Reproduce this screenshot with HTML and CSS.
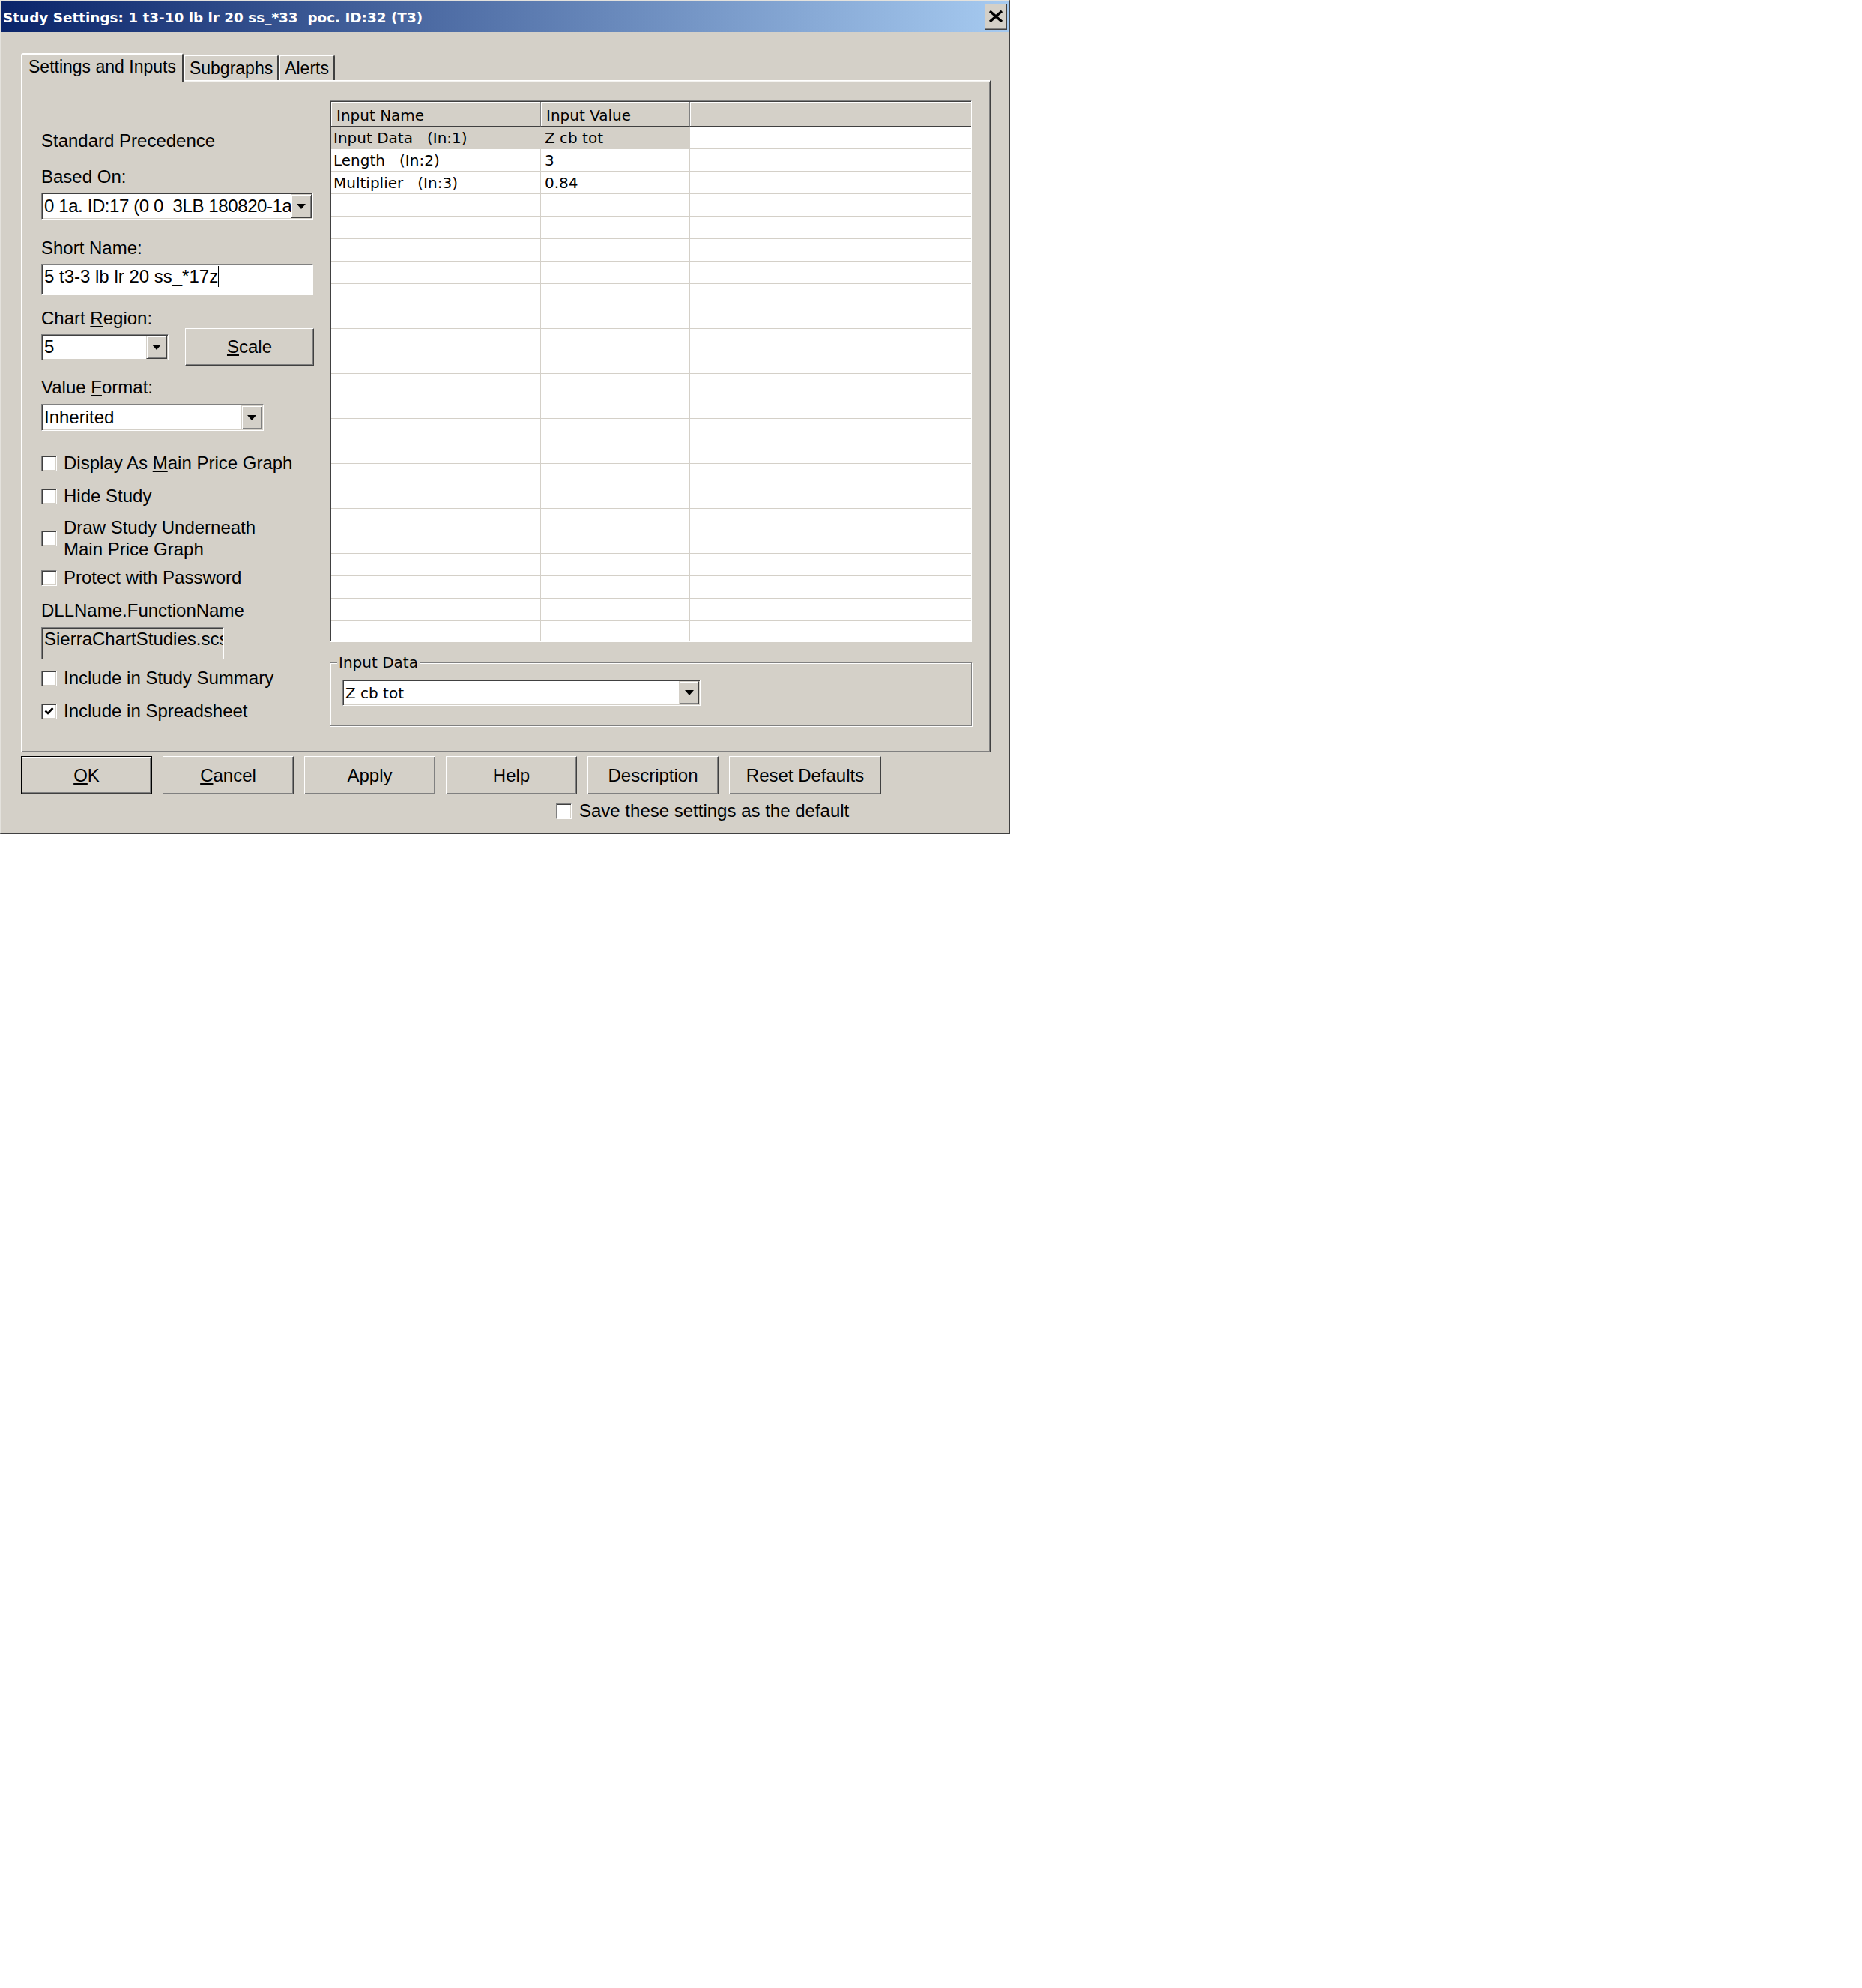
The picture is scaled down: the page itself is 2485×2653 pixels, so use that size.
FILE: index.html
```html
<!DOCTYPE html>
<html lang="en">
<head>
    <meta charset="UTF-8">
    <title>Study Settings</title>
    <link rel="stylesheet" href="styles.css">
</head>
<body>
    <div class="dialog">
        <div class="titlebar">
            <span class="title">Study Settings: 1 t3-10 lb lr 20 ss_*33  poc. ID:32 (T3)</span>
            <button class="close" type="button" aria-label="Close">
                <svg width="20" height="16" viewBox="0 0 20 16"><path d="M2 1L18 15M18 1L2 15" stroke="#000" stroke-width="3.4"/></svg>
            </button>
        </div>

        <div class="content">
            <div class="tabs">
                <div class="tab active">Settings and Inputs</div>
                <div class="tab">Subgraphs</div>
                <div class="tab">Alerts</div>
            </div>

            <div class="panel">
                <!-- left column: study options -->
                <div class="settings">
                    <div class="caption">Standard Precedence</div>
                    <div class="caption based-label">Based On:</div>
                    <div class="combo based-on">
                        <span class="combo-text">0 1a. ID:17 (0 0  3LB 180820-1a</span>
                        <span class="combo-btn"><svg width="12" height="7" viewBox="0 0 12 7"><path d="M0 0H12L6 7Z"/></svg></span>
                    </div>
                    <div class="caption short-label">Short Name:</div>
                    <div class="edit short-name">5 t3-3 lb lr 20 ss_*17z<span class="caret"></span></div>
                    <div class="caption region-label">Chart <u>R</u>egion:</div>
                    <div class="region-row">
                        <div class="combo region">
                            <span class="combo-text">5</span>
                            <span class="combo-btn"><svg width="12" height="7" viewBox="0 0 12 7"><path d="M0 0H12L6 7Z"/></svg></span>
                        </div>
                        <button class="btn scale" type="button"><span><u>S</u>cale</span></button>
                    </div>
                    <div class="caption format-label">Value <u>F</u>ormat:</div>
                    <div class="combo value-format">
                        <span class="combo-text">Inherited</span>
                        <span class="combo-btn"><svg width="12" height="7" viewBox="0 0 12 7"><path d="M0 0H12L6 7Z"/></svg></span>
                    </div>

                    <label class="check check-main"><span class="box"></span><span>Display As <u>M</u>ain Price Graph</span></label>
                    <label class="check check-hide"><span class="box"></span><span>Hide Study</span></label>
                    <label class="check check-under"><span class="box"></span><span class="two-line">Draw Study Underneath<br>Main Price Graph</span></label>
                    <label class="check check-protect"><span class="box"></span><span>Protect with Password</span></label>

                    <div class="caption dll-label">DLLName.FunctionName</div>
                    <div class="edit readonly dll">SierraChartStudies.scs</div>

                    <label class="check check-summary"><span class="box"></span><span>Include in Study Summary</span></label>
                    <label class="check check-sheet"><span class="box"><svg width="13" height="12" viewBox="0 0 13 12"><path d="M1.5 5.5L5 9L11.5 2" fill="none" stroke="#000" stroke-width="2.6"/></svg></span><span>Include in Spreadsheet</span></label>
                </div>

                <!-- right column: inputs list -->
                <div class="inputs">
                    <div class="grid">
                        <div class="grid-head">
                            <div class="hcell">Input Name</div>
                            <div class="hcell">Input Value</div>
                            <div class="hcell"></div>
                        </div>
                        <div class="row selected"><div class="cell name">Input Data   (In:1)</div><div class="cell value">Z cb tot</div><div class="cell"></div></div>
                        <div class="row"><div class="cell name">Length   (In:2)</div><div class="cell value">3</div><div class="cell"></div></div>
                        <div class="row"><div class="cell name">Multiplier   (In:3)</div><div class="cell value">0.84</div><div class="cell"></div></div>
                        <div class="row"><div class="cell"></div><div class="cell"></div><div class="cell"></div></div>
                        <div class="row"><div class="cell"></div><div class="cell"></div><div class="cell"></div></div>
                        <div class="row"><div class="cell"></div><div class="cell"></div><div class="cell"></div></div>
                        <div class="row"><div class="cell"></div><div class="cell"></div><div class="cell"></div></div>
                        <div class="row"><div class="cell"></div><div class="cell"></div><div class="cell"></div></div>
                        <div class="row"><div class="cell"></div><div class="cell"></div><div class="cell"></div></div>
                        <div class="row"><div class="cell"></div><div class="cell"></div><div class="cell"></div></div>
                        <div class="row"><div class="cell"></div><div class="cell"></div><div class="cell"></div></div>
                        <div class="row"><div class="cell"></div><div class="cell"></div><div class="cell"></div></div>
                        <div class="row"><div class="cell"></div><div class="cell"></div><div class="cell"></div></div>
                        <div class="row"><div class="cell"></div><div class="cell"></div><div class="cell"></div></div>
                        <div class="row"><div class="cell"></div><div class="cell"></div><div class="cell"></div></div>
                        <div class="row"><div class="cell"></div><div class="cell"></div><div class="cell"></div></div>
                        <div class="row"><div class="cell"></div><div class="cell"></div><div class="cell"></div></div>
                        <div class="row"><div class="cell"></div><div class="cell"></div><div class="cell"></div></div>
                        <div class="row"><div class="cell"></div><div class="cell"></div><div class="cell"></div></div>
                        <div class="row"><div class="cell"></div><div class="cell"></div><div class="cell"></div></div>
                        <div class="row"><div class="cell"></div><div class="cell"></div><div class="cell"></div></div>
                        <div class="row"><div class="cell"></div><div class="cell"></div><div class="cell"></div></div>
                        <div class="row"><div class="cell"></div><div class="cell"></div><div class="cell"></div></div>
                    </div>

                    <fieldset class="group">
                        <legend>Input Data</legend>
                        <div class="combo input-data">
                            <span class="combo-text">Z cb tot</span>
                            <span class="combo-btn"><svg width="12" height="7" viewBox="0 0 12 7"><path d="M0 0H12L6 7Z"/></svg></span>
                        </div>
                    </fieldset>
                </div>
            </div>

            <div class="buttons">
                <button class="btn default" type="button"><span><u>O</u>K</span></button>
                <button class="btn" type="button"><span><u>C</u>ancel</span></button>
                <button class="btn" type="button">Apply</button>
                <button class="btn" type="button">Help</button>
                <button class="btn" type="button">Description</button>
                <button class="btn wide" type="button">Reset Defaults</button>
            </div>
            <label class="check save"><span class="box"></span><span>Save these settings as the default</span></label>
        </div>
    </div>
</body>
</html>
```

FILE: styles.css
```css
body {
    margin: 0;
    background: #fff;
    font-family: "Liberation Sans", Arial, sans-serif;
    font-size: 24px;
    color: #000;
}

.dialog {
    width: 1348px;
    height: 1113px;
    box-sizing: border-box;
    background: #d4d0c8;
    border-top: 1px solid #e4e2dd;
    border-left: 1px solid #e4e2dd;
    border-right: 2px solid #404040;
    border-bottom: 2px solid #404040;
}

/* caption bar */
.titlebar {
    height: 42px;
    display: flex;
    align-items: center;
    justify-content: space-between;
    padding: 0 2px 0 3px;
    background: linear-gradient(to right, #0a246a, #a6caf0);
}
.title {
    font-family: "DejaVu Sans", sans-serif;
    font-weight: bold;
    font-size: 18.4px;
    color: #fff;
    white-space: pre;
    padding-top: 3px;
}
.close {
    width: 30px;
    height: 35px;
    padding: 0;
    display: flex;
    align-items: center;
    justify-content: center;
    box-sizing: border-box;
    background: #d4d0c8;
    border: 1px solid;
    border-color: #fff #404040 #404040 #fff;
    box-shadow: inset -1px -1px 0 #808080;
}

.content {
    padding: 28px 24px 0 27px;
}

/* tab strip */
.tabs {
    display: flex;
    align-items: flex-end;
    height: 36px;
}
.tab {
    height: 34px;
    box-sizing: border-box;
    padding: 3px 6px 0;
    font-size: 23px;
    line-height: 26px;
    white-space: nowrap;
    border: 2px solid;
    border-bottom: none;
    border-color: #fff #404040 transparent #fff;
    border-radius: 3px 3px 0 0;
}
.tab.active {
    height: 38px;
    margin-bottom: -2px;
    padding: 3px 8px 0;
    position: relative;
    z-index: 1;
    background: #d4d0c8;
}

.panel {
    height: 897px;
    box-sizing: border-box;
    border: 1px solid;
    border-color: #fff #404040 #404040 #fff;
    box-shadow: inset 1px 1px 0 #f4f3f0, inset -1px -1px 0 #808080;
    display: grid;
    grid-template-columns: 364px 857px;
    column-gap: 21px;
    padding: 0 24px 0 26px;
    align-items: start;
}

/* left column */
.settings {
    padding-top: 66px;
    display: flex;
    flex-direction: column;
    align-items: flex-start;
}
.caption {
    line-height: 28px;
    white-space: nowrap;
}
.based-label { margin-top: 20px; }
.short-label { margin-top: 24px; }
.region-label { margin-top: 17px; }
.format-label { margin-top: 15px; }
.dll-label { margin-top: 16px; }

.combo, .edit, .box, .grid {
    box-sizing: border-box;
    border: 1px solid;
    border-color: #808080 #fff #fff #808080;
    box-shadow: inset 1px 1px 0 #404040, inset -1px -1px 0 #d4d0c8;
}

.combo {
    display: flex;
    padding: 1px;
    background: #fff;
}
.combo-text {
    flex: 1;
    padding-left: 2px;
    white-space: pre;
    overflow: hidden;
    display: flex;
    align-items: center;
}
.combo-btn {
    width: 28px;
    flex: none;
    display: flex;
    align-items: center;
    justify-content: center;
    box-sizing: border-box;
    background: #d4d0c8;
    border: 1px solid;
    border-color: #d4d0c8 #404040 #404040 #d4d0c8;
    box-shadow: inset 1px 1px 0 #fff, inset -1px -1px 0 #808080;
}

.based-on {
    width: 363px;
    height: 36px;
    margin-top: 7px;
}
.based-on .combo-text { letter-spacing: -0.4px; }
.region {
    width: 170px;
    height: 35px;
}
.value-format {
    width: 297px;
    height: 36px;
    margin-top: 8px;
}

.edit {
    background: #fff;
    line-height: 28px;
    padding: 2px 2px 0 3px;
    white-space: nowrap;
    overflow: hidden;
}
.short-name {
    width: 363px;
    height: 42px;
    margin-top: 7px;
}
.caret {
    display: inline-block;
    width: 1px;
    height: 28px;
    background: #000;
    vertical-align: top;
}
.edit.readonly {
    background: #d4d0c8;
    padding-top: 1px;
}
.dll {
    width: 244px;
    height: 43px;
    margin-top: 8px;
}

.region-row {
    width: 364px;
    margin-top: -1px;
    display: flex;
    align-items: center;
    justify-content: space-between;
}

.btn {
    box-sizing: border-box;
    padding: 0;
    font: inherit;
    color: #000;
    background: #d4d0c8;
    border: 1px solid;
    border-color: #fff #404040 #404040 #fff;
    box-shadow: inset -1px -1px 0 #808080;
    display: flex;
    align-items: center;
    justify-content: center;
}
.scale {
    width: 172px;
    height: 50px;
}

/* checkboxes */
.check {
    display: flex;
    align-items: center;
    gap: 9px;
    line-height: 28px;
    white-space: nowrap;
}
.box {
    width: 21px;
    height: 21px;
    flex: none;
    background: #fff;
    display: flex;
    align-items: center;
    justify-content: center;
}
.two-line { line-height: 29px; }
.check-main { margin-top: 29px; }
.check-hide { margin-top: 16px; }
.check-under { margin-top: 13px; }
.check-protect { margin-top: 10px; }
.check-summary { margin-top: 11px; }
.check-sheet { margin-top: 16px; }

/* right column */
.inputs {
    padding-top: 26px;
}
.grid {
    height: 723px;
    padding: 1px 0 0 1px;
    background: #fff;
    overflow: hidden;
    box-shadow: inset 1px 1px 0 #404040;
    font-family: "DejaVu Sans", sans-serif;
    font-size: 20px;
}
.grid-head, .row {
    display: grid;
    grid-template-columns: 280px 199px 1fr;
}
.hcell {
    height: 33px;
    box-sizing: border-box;
    padding: 4px 0 0 7px;
    line-height: 28px;
    background: #d4d0c8;
    border-right: 1px solid #808080;
    border-bottom: 1px solid #404040;
    box-shadow: inset 1px 1px 0 #fff;
}
.hcell:last-child { border-right: none; }
.row .cell {
    height: 30px;
    box-sizing: border-box;
    padding: 1px 0 0 3px;
    line-height: 28px;
    white-space: pre;
    border-bottom: 1px solid #d4d0c8;
    border-right: 1px solid #d4d0c8;
}
.row .cell:last-child { border-right: none; }
.row .value { padding-left: 5px; }
.row.selected .name,
.row.selected .value {
    background: #d4d0c8;
}

.group {
    margin: 13px 0 0;
    padding: 9px 0 26px 16px;
    min-width: 0;
    border: 1px solid #808080;
    box-shadow: inset 1px 1px 0 #fff, 1px 1px 0 #fff;
}
.group legend {
    margin-left: -7px;
    padding: 0 2px;
    background: #d4d0c8;
    font-family: "DejaVu Sans", sans-serif;
    font-size: 20px;
    line-height: 28px;
}
.input-data {
    width: 478px;
    height: 35px;
    font-family: "DejaVu Sans", sans-serif;
    font-size: 20px;
}
.input-data .combo-btn { width: 27px; }

/* dialog buttons */
.buttons {
    display: flex;
    gap: 14px;
    margin-top: 5px;
}
.buttons .btn {
    width: 175px;
    height: 51px;
}
.buttons .btn.wide { width: 203px; }
.btn.default {
    border: 1px solid #000;
    box-shadow: inset 1px 1px 0 #fff, inset -1px -1px 0 #404040, inset -2px -2px 0 #808080;
}
.save {
    margin: 8px 0 0 714px;
    gap: 10px;
}
```
